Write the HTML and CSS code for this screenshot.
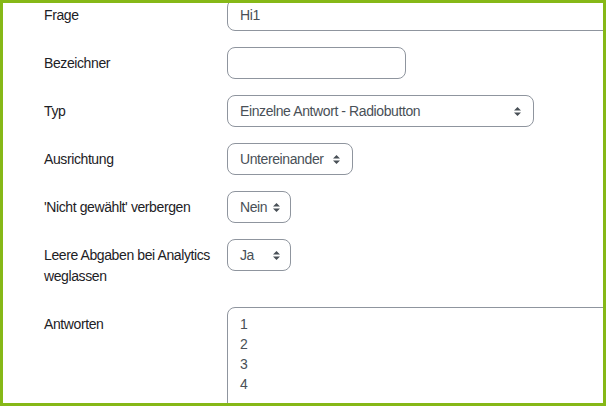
FILE: index.html
```html
<!DOCTYPE html>
<html lang="de">
<head>
<meta charset="utf-8">
<link rel="stylesheet" href="styles.css">
</head>
<body>
<div class="frame">
  <form class="form">
    <div class="row">
      <div class="label">Frage</div>
      <div class="control input w-frage">Hi1</div>
    </div>
    <div class="row">
      <div class="label">Bezeichner</div>
      <div class="control input w-bez"></div>
    </div>
    <div class="row">
      <div class="label">Typ</div>
      <div class="control select w-typ"><span>Einzelne Antwort - Radiobutton</span><svg class="arrow" width="7" height="9" viewBox="0 0 7 9"><path d="M3.5 0L7 3.5H0Z M3.5 9L0 5.5H7Z" fill="#495057"/></svg></div>
    </div>
    <div class="row">
      <div class="label">Ausrichtung</div>
      <div class="control select w-aus"><span>Untereinander</span><svg class="arrow" width="7" height="9" viewBox="0 0 7 9"><path d="M3.5 0L7 3.5H0Z M3.5 9L0 5.5H7Z" fill="#495057"/></svg></div>
    </div>
    <div class="row">
      <div class="label">'Nicht gewählt' verbergen</div>
      <div class="control select w-small"><span>Nein</span><svg class="arrow" width="7" height="9" viewBox="0 0 7 9"><path d="M3.5 0L7 3.5H0Z M3.5 9L0 5.5H7Z" fill="#495057"/></svg></div>
    </div>
    <div class="row row-tall">
      <div class="label">Leere Abgaben bei Analytics weglassen</div>
      <div class="control select w-small"><span>Ja</span><svg class="arrow" width="7" height="9" viewBox="0 0 7 9"><path d="M3.5 0L7 3.5H0Z M3.5 9L0 5.5H7Z" fill="#495057"/></svg></div>
    </div>
    <div class="row">
      <div class="label label-ta">Antworten</div>
      <div class="textarea">1<br>2<br>3<br>4</div>
    </div>
  </form>
</div>
</body>
</html>
```
FILE: styles.css
```css
html, body {
  margin: 0;
  padding: 0;
  background: #fff;
}
.frame {
  width: 606px;
  height: 406px;
  box-sizing: border-box;
  border: 3px solid #86b817;
  overflow: hidden;
  background: #fff;
  font-family: "Liberation Sans", Arial, sans-serif;
  font-size: 14px;
  letter-spacing: -0.4px;
  color: #1d2125;
}
.form {
  margin: -4px 0 0 0;
  padding-left: 41px;
}
.row {
  display: flex;
  align-items: flex-start;
  margin-bottom: 16px;
}
.label {
  flex: none;
  width: 178px;
  padding: 6px 5px 0 0;
  line-height: 21px;
}
.row-tall .label {
  padding-bottom: 4px;
}
.label-ta {
  padding-top: 7px;
}
.control {
  flex: none;
  box-sizing: border-box;
  height: 32px;
  border: 1px solid #8f959e;
  border-radius: 8px;
  padding: 0 12px;
  display: flex;
  align-items: center;
  color: #495057;
  line-height: 21px;
}
.select {
  justify-content: space-between;
}
.arrow {
  flex: none;
  display: block;
}
.w-frage { width: 420px; }
.w-bez { width: 179px; }
.w-typ { width: 307px; }
.w-aus { width: 126px; }
.w-small { width: 64px; padding-right: 10px; }
.textarea {
  flex: none;
  box-sizing: border-box;
  width: 420px;
  height: 130px;
  border: 1px solid #8f959e;
  border-radius: 8px;
  padding: 6px 12px;
  line-height: 20px;
  color: #495057;
}
```
